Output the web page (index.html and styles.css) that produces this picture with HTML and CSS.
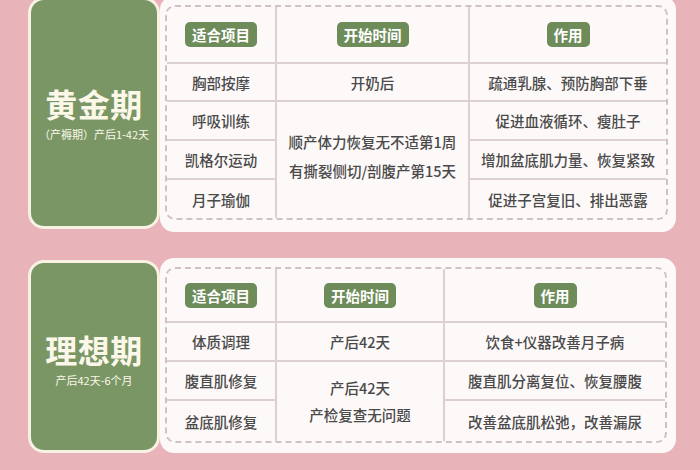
FILE: index.html
```html
<!DOCTYPE html>
<html lang="zh">
<head>
<meta charset="utf-8">
<link rel="stylesheet" href="styles.css">
</head>
<body>
<div class="page">
  <section class="period period-gold">
    <div class="badge">
      <div class="badge-title">黄金期</div>
      <div class="badge-sub">（产褥期）产后1-42天</div>
    </div>
    <div class="card">
      <div class="table table-gold">
        <div class="cell head"><span class="pill">适合项目</span></div>
        <div class="cell head"><span class="pill">开始时间</span></div>
        <div class="cell head last"><span class="pill">作用</span></div>

        <div class="cell">胸部按摩</div>
        <div class="cell">开奶后</div>
        <div class="cell last">疏通乳腺、预防胸部下垂</div>

        <div class="cell">呼吸训练</div>
        <div class="cell merged merged-gold"><div class="lines"><div>顺产体力恢复无不适第1周</div><div>有撕裂侧切/剖腹产第15天</div></div></div>
        <div class="cell last">促进血液循环、瘦肚子</div>

        <div class="cell">凯格尔运动</div>
        <div class="cell last">增加盆底肌力量、恢复紧致</div>

        <div class="cell">月子瑜伽</div>
        <div class="cell last">促进子宫复旧、排出恶露</div>
      </div>
    </div>
  </section>

  <section class="period period-ideal">
    <div class="badge">
      <div class="badge-title">理想期</div>
      <div class="badge-sub">产后42天-6个月</div>
    </div>
    <div class="card">
      <div class="table table-ideal">
        <div class="cell head"><span class="pill">适合项目</span></div>
        <div class="cell head"><span class="pill">开始时间</span></div>
        <div class="cell head last"><span class="pill">作用</span></div>

        <div class="cell">体质调理</div>
        <div class="cell">产后42天</div>
        <div class="cell last">饮食+仪器改善月子病</div>

        <div class="cell">腹直肌修复</div>
        <div class="cell merged merged-ideal"><div class="lines"><div>产后42天</div><div>产检复查无问题</div></div></div>
        <div class="cell last">腹直肌分离复位、恢复腰腹</div>

        <div class="cell">盆底肌修复</div>
        <div class="cell last">改善盆底肌松弛，改善漏尿</div>
      </div>
    </div>
  </section>
</div>
</body>
</html>
```

FILE: styles.css
```css
* { box-sizing: border-box; }

html, body {
  margin: 0;
  padding: 0;
}

body {
  background: #e9b4b9;
  font-family: "Noto Sans CJK SC", "Noto Sans", sans-serif;
  color: #4a4a4a;
  width: 700px;
  height: 470px;
  overflow: hidden;
}

.page {
  display: flex;
  flex-direction: column;
  gap: 26px;
  padding-left: 28px;
  margin-top: -4px;
}

.period {
  display: flex;
  align-items: flex-start;
}

.badge {
  width: 132px;
  flex: none;
  background: #7a9665;
  border: 3px solid #f7f2e3;
  border-radius: 16px;
  display: flex;
  flex-direction: column;
  align-items: center;
  justify-content: center;
  color: #fbf8ea;
  position: relative;
  z-index: 1;
}

.period-gold .badge { height: 232px; margin-top: 1px; }
.period-ideal .badge { height: 193px; margin-top: 2px; }

.badge-title {
  font-size: 32px;
  font-weight: 700;
  line-height: 36px;
  letter-spacing: 0.5px;
}

.badge-sub {
  font-size: 11px;
  line-height: 14px;
  margin-top: 6px;
  white-space: nowrap;
}

.period-ideal .badge-title { margin-top: 4px; }

.card {
  width: 516px;
  background: #fdf9f9;
  border-radius: 14px;
  padding: 9px 8px 12px 5px;
}

.period-ideal .card { padding: 9px 9px 10px 5px; }

.table {
  display: grid;
  border: 2px dashed #cfc2c5;
  border-radius: 10px;
}

.table-gold {
  grid-template-columns: 110px 193px 1fr;
  grid-template-rows: 55px 38px 39px 39px 40px;
}

.table-ideal {
  grid-template-columns: 110px 168px 1fr;
  grid-template-rows: 52px 39px 39px 42px;
}

.cell {
  display: flex;
  align-items: center;
  justify-content: center;
  font-size: 14.5px;
  font-weight: 500;
  white-space: nowrap;
  border-top: 2px solid #ddd0d3;
  border-right: 2px solid #ddd0d3;
}

.cell.head { border-top: none; }
.cell.last { border-right: none; }

.merged-gold { grid-column: 2; grid-row: 3 / span 3; }
.merged-ideal { grid-column: 2; grid-row: 3 / span 2; }

.lines {
  display: flex;
  flex-direction: column;
  align-items: center;
  line-height: 29px;
  padding-bottom: 8px;
}

.merged-ideal .lines { line-height: 27px; padding-bottom: 2px; }

.pill {
  display: inline-block;
  background: #6e8b5a;
  color: #ffffff;
  font-weight: 700;
  font-size: 14.5px;
  line-height: 25px;
  height: 25px;
  padding: 0 7px;
  border-radius: 5px;
}
```
